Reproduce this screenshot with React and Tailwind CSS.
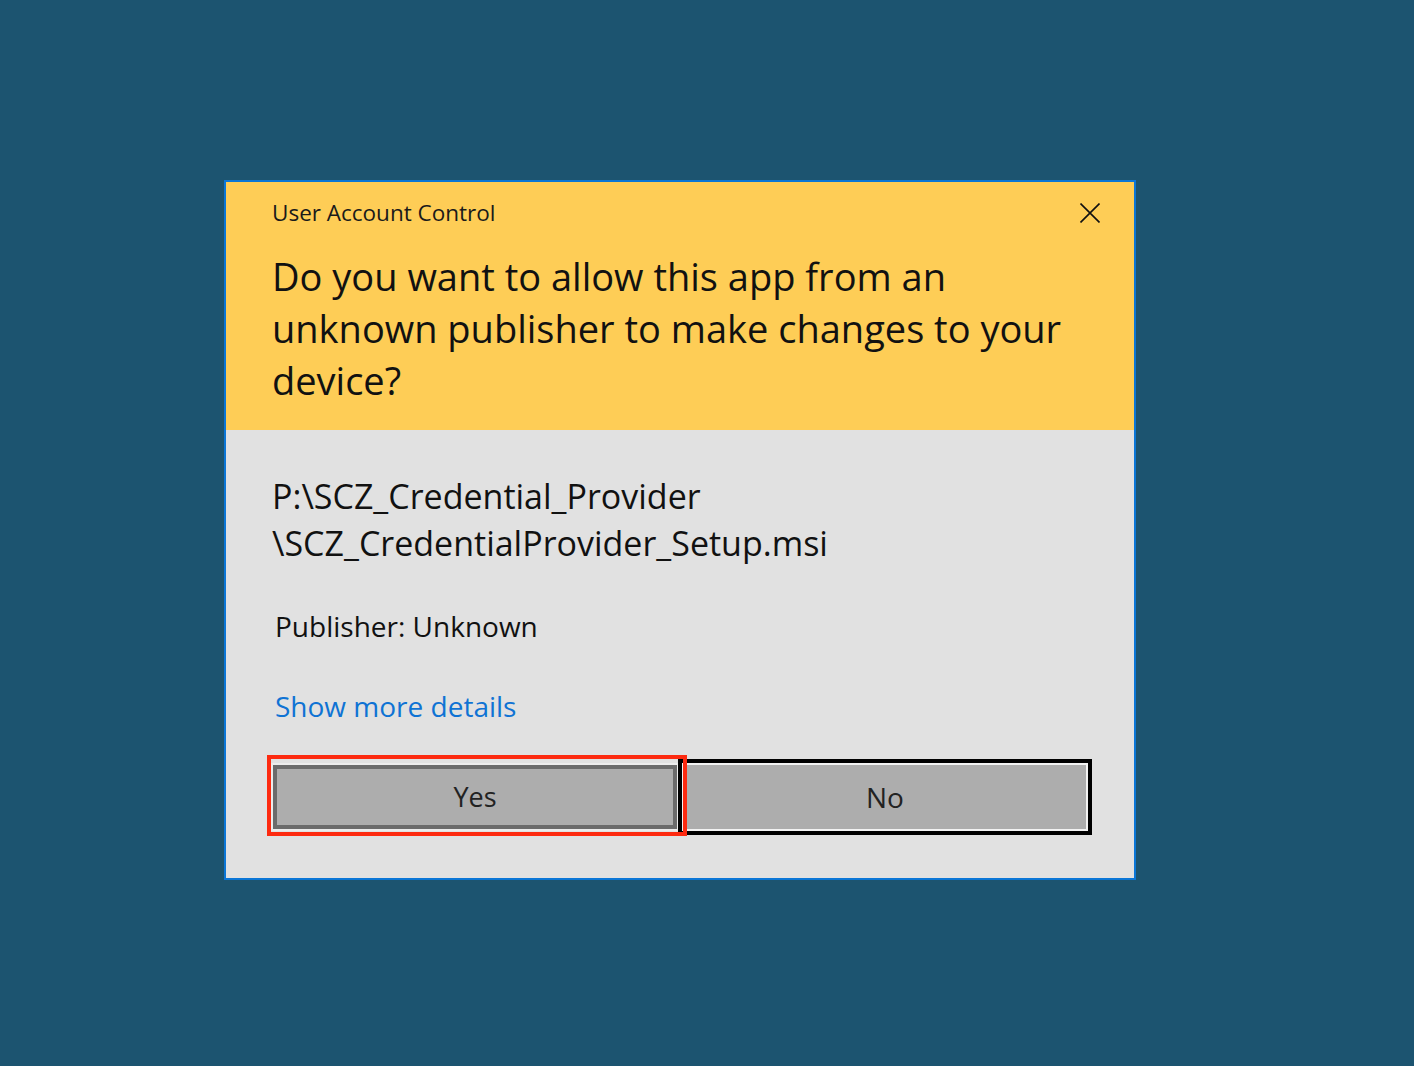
export default function App() {
  return (
    <div className="min-h-[1066px] w-full bg-[#1c5470] pt-[180px] pl-[224px]">
      <div className="w-[912px] border-2 border-[#0b76d6] bg-[#e1e1e1] font-['Open_Sans','Noto_Sans',sans-serif]">
        <div className="bg-[#fecd56] pl-[46px] pr-[34px] pt-[17px] pb-[24px]">
          <div className="flex items-center justify-between h-[28px]">
            <span className="text-[22.5px] leading-[28px] text-[#1a1a1a]">User Account Control</span>
            <svg width="20" height="20" viewBox="0 0 20 20" className="block">
              <path d="M0.5 0.5 L19.5 19.5 M19.5 0.5 L0.5 19.5" stroke="#111" strokeWidth="1.6" fill="none" />
            </svg>
          </div>
          <div className="mt-[23px] text-[38px] leading-[52px] text-[#111] whitespace-nowrap">
            Do you want to allow this app from an<br />
            unknown publisher to make changes to your<br />
            device?
          </div>
        </div>
        <div className="pl-[46px] pr-[42px] pt-[43px] pb-[43px]">
          <div className="text-[34px] leading-[47px] text-[#111] whitespace-nowrap">
            P:\SCZ_Credential_Provider<br />
            \SCZ_CredentialProvider_Setup.msi
          </div>
          <div className="mt-[41px] pl-[3px] text-[28px] leading-[36px] text-[#111]">Publisher: Unknown</div>
          <div className="mt-[44px] pl-[3px] text-[28px] leading-[36px] text-[#0f73d4]">Show more details</div>
          <div className="relative mt-[35px] -ml-px flex items-center">
            <div className="w-[408px] h-[68px] border-2 border-[#ececec]">
              <div className="h-full w-full border-4 border-[#6b6b6b] bg-[#adadad] flex items-center justify-center text-[27px] text-[#222]">
                Yes
              </div>
            </div>
            <div className="-ml-px w-[414px] h-[76px] border-4 border-black">
              <div className="h-full w-full border-2 border-[#f2f2f2] bg-[#adadad] flex items-center justify-center text-[28px] text-[#222]">
                No
              </div>
            </div>
            <div className="absolute left-[-4px] top-[-4px] w-[420px] h-[81px] border-4 border-[#fd2a10]" />
          </div>
        </div>
      </div>
    </div>
  );
}
